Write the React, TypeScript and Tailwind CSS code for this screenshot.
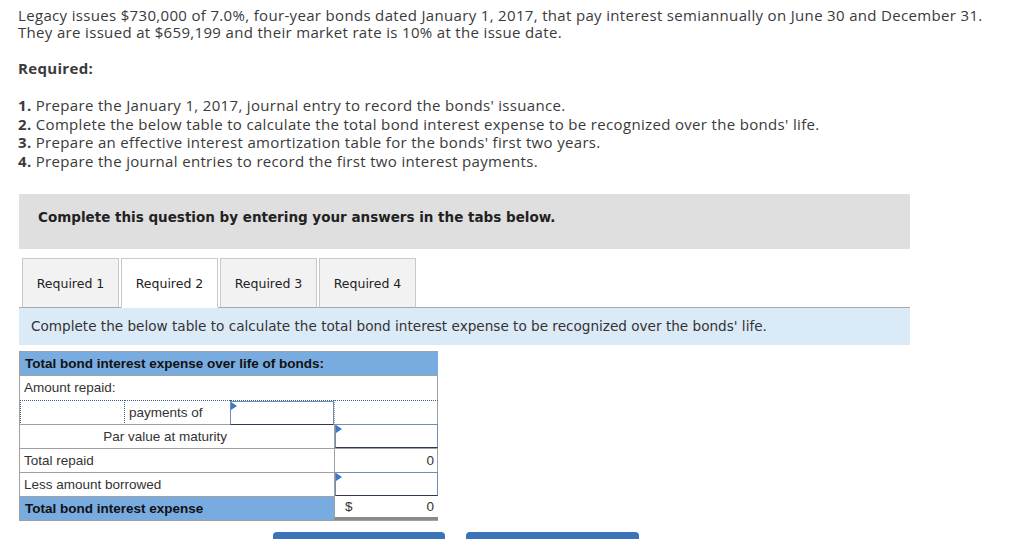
import React from 'react';

const TABS = ['Required 1', 'Required 2', 'Required 3', 'Required 4'];

const STEPS = [
  'Prepare the January 1, 2017, journal entry to record the bonds\' issuance.',
  'Complete the below table to calculate the total bond interest expense to be recognized over the bonds\' life.',
  'Prepare an effective interest amortization table for the bonds\' first two years.',
  'Prepare the journal entries to record the first two interest payments.',
];

// small input cell with the blue corner marker
function InputCell({ className = '' }: { className?: string }) {
  return (
    <div className={`relative h-full border border-[#6f8fb3] border-b-[#2b3a4d] bg-white ${className}`}>
      <span className="absolute left-0 top-0 w-0 h-0 border-y-[4px] border-y-transparent border-l-[6px] border-l-[#3d77c1]" />
    </div>
  );
}

export default function App() {
  return (
    <div className="bg-white w-[1024px] h-[539px] overflow-hidden pl-[18px] pt-[7px] text-[#3a3a3a]">
      {/* Problem text */}
      <div className="font-['Open_Sans',sans-serif] text-[15px] tracking-[0.33px]">
        <p className="leading-[17px]">
          Legacy issues $730,000 of 7.0%, four-year bonds dated January 1, 2017, that pay interest semiannually on June 30 and December 31.
          <br />
          They are issued at $659,199 and their market rate is 10% at the issue date.
        </p>
        <p className="mt-[19px] font-bold leading-4">Required:</p>
        <ol className="mt-[20px] leading-[18.67px]">
          {STEPS.map((s, i) => (
            <li key={i}>
              <span className="font-bold">{i + 1}.</span> {s}
            </li>
          ))}
        </ol>
      </div>

      {/* Instructions box */}
      <div className="mt-[23px] w-[891px] h-[55px] ml-px bg-[#dfdfdf] pt-[13px] pl-[19px] font-['DejaVu_Sans',sans-serif] text-[13.5px] font-bold text-[#222]">
        Complete this question by entering your answers in the tabs below.
      </div>

      {/* Tabs */}
      <div className="mt-[9px] ml-px w-[891px] border-b border-[#a9a9a9] flex gap-[2px] pl-[3px] font-['DejaVu_Sans',sans-serif] text-[12.5px] text-[#222]">
        {TABS.map((t, i) => (
          <div
            key={t}
            className={
              'w-[97px] h-[50px] -mb-px flex items-center justify-center pt-[4px] border border-[#c8c8c8] ' +
              (i === 1 ? 'bg-white border-b-white' : 'bg-[#f2f2f2] border-b-[#a9a9a9]')
            }
          >
            {t}
          </div>
        ))}
      </div>

      {/* Tab content header */}
      <div className="ml-px w-[891px] h-[37px] bg-[#dbeaf7] flex items-center pl-[12px] pt-px font-['DejaVu_Sans',sans-serif] text-[13.6px] text-[#333]">
        Complete the below table to calculate the total bond interest expense to be recognized over the bonds' life.
      </div>

      {/* Table */}
      <div className="mt-[6px] ml-px w-[419px] border border-[#a0a0a0] font-['Liberation_Sans',sans-serif] text-[13.5px] text-[#333] grid grid-cols-[105px_105px_104px_104px] auto-rows-[24px]">
        <div className="col-span-4 bg-[#78abe0] font-bold text-[#111] flex items-center pl-[5px] pt-px border-b border-[#a0a0a0]">
          Total bond interest expense over life of bonds:
        </div>
        <div className="col-span-4 flex items-center pl-[4px] pt-px">Amount repaid:</div>

        {/* payments row */}
        <div className="border border-dotted border-[#3a5f8f] h-[25px]" />
        <div className="flex items-center pl-[4px] border-t border-dotted border-t-[#3a5f8f] h-[25px]">payments of</div>
        <div className="h-[25px] border-t border-dotted border-t-[#3a5f8f]">
          <InputCell />
        </div>
        <div className="h-[25px] border-t border-dotted border-t-[#3a5f8f] border-l border-l-[#a0a0a0]" />

        <div className="col-span-2 flex items-center justify-end pr-[3px] pt-px border-t border-[#a0a0a0]">Par value at maturity</div>
        <div className="border-t border-[#a0a0a0]" />
        <div className="border-l border-[#a0a0a0]">
          <InputCell />
        </div>

        <div className="col-span-3 flex items-center pl-[4px] pt-[2px] border-t border-[#a0a0a0]">Total repaid</div>
        <div className="flex items-center justify-end pr-[4px] pt-[2px] border-t border-l border-[#a0a0a0]">0</div>

        <div className="col-span-3 flex items-center pl-[4px] pt-[2px] border-t border-[#a0a0a0]">Less amount borrowed</div>
        <div className="border-l border-[#a0a0a0]">
          <InputCell />
        </div>

        <div className="col-span-3 bg-[#78abe0] font-bold text-[#111] flex items-center pl-[5px] pt-[2px] border-t border-[#a0a0a0]">
          Total bond interest expense
        </div>
        <div className="flex items-center justify-between pl-[10px] pr-[4px] pt-[2px] border-l border-[#a0a0a0] border-b-[3px] border-b-[#8a8a8a] bg-white">
          <span>$</span>
          <span>0</span>
        </div>
      </div>

      {/* Navigation buttons */}
      <div className="mt-[11px] ml-[255px] flex gap-[21px]">
        <div className="w-[172px] h-[30px] rounded-t-[4px] bg-[#3b73b9]" />
        <div className="w-[173px] h-[30px] rounded-t-[4px] bg-[#3b73b9]" />
      </div>
    </div>
  );
}
